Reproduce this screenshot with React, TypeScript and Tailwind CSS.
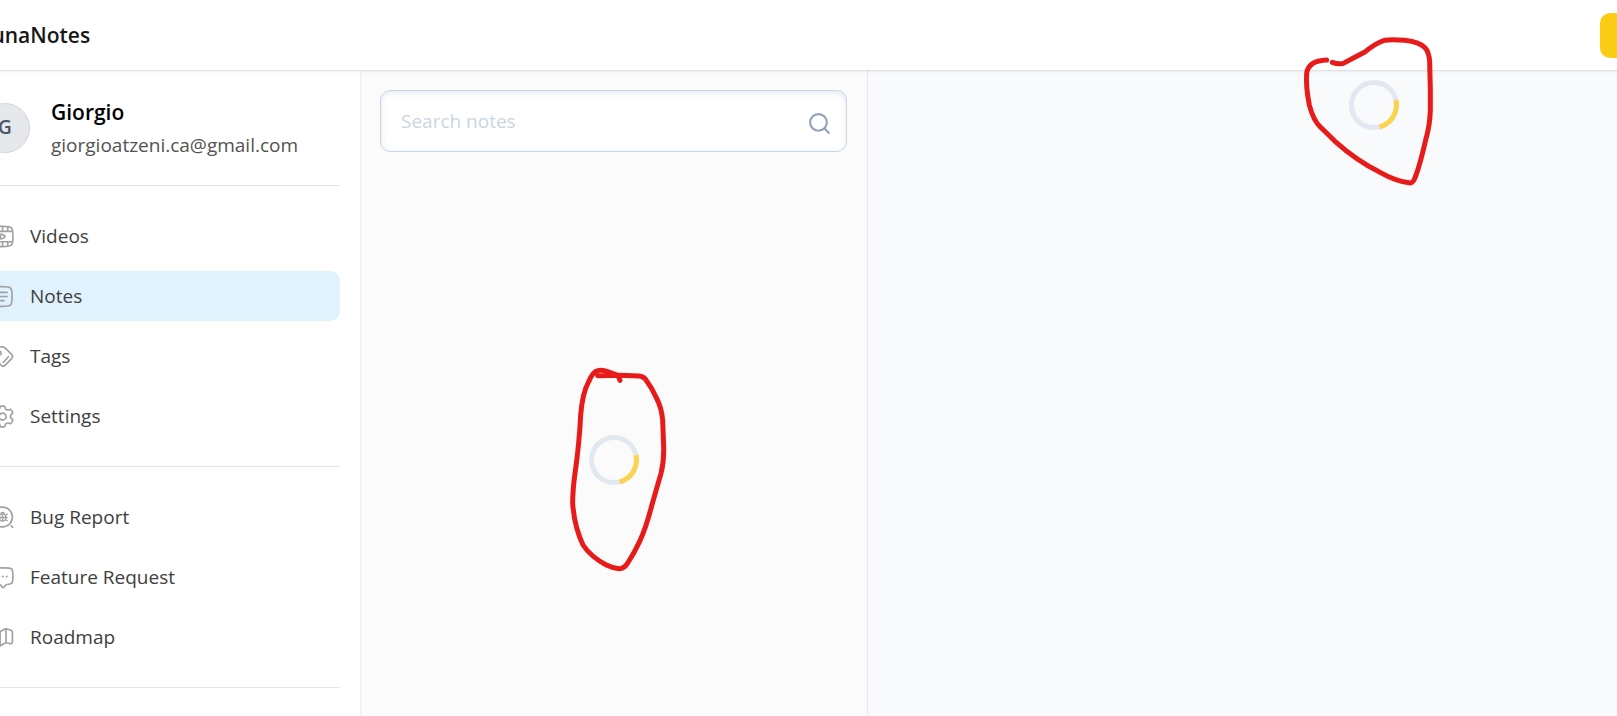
import { ReactNode } from "react";
import { clsx } from "clsx";

interface NavItem {
  label: string;
  icon: ReactNode;
  active?: boolean;
}

const mainItems: NavItem[] = [
  {
    label: "Videos",
    icon: (
      <>
        <path d="M2 12c0-4.6 0-6.8 1.4-8.2C4.9 2.3 7.200 2.300 12 2.300s7.200 0 8.600 1.500C22 5.200 22 7.400 22 12s0 6.800-1.400 8.200c-1.400 1.500-3.800 1.500-8.600 1.500s-7.100 0-8.600-1.500C2 18.800 2 16.600 2 12Z" />
        <path d="M2 7h20M2 17h20M7 2.500V7M12 2.500V7M17 2.500V7M7 17v4.500M12 17v4.500M17 17v4.500" />
        <path d="M14.400 12c0-.6-.6-.9-1.700-1.600-1.100-.6-1.700-1-2.200-.7-.4.300-.4.900-.4 2.300s0 2 .4 2.300c.5.300 1.100-.1 2.200-.7 1.100-.7 1.700-1 1.700-1.600Z" />
      </>
    ),
  },
  {
    label: "Notes",
    active: true,
    icon: (
      <>
        <path d="M3 12c0-4.500 0-6.700 1.300-8.100C5.700 2.500 7.800 2.500 12 2.500s6.400 0 7.800 1.400C21.200 5.300 21.200 7.500 21.200 12s0 6.700-1.400 8.100c-1.400 1.400-3.600 1.400-7.800 1.400s-6.300 0-7.700-1.400C3 18.700 3 16.500 3 12Z" />
        <path d="M8 8h9M8 12h9M8 16h6" />
      </>
    ),
  },
  {
    label: "Tags",
    icon: (
      <>
        <path d="M4.700 13.700c-2.200-2.400-2.200-3.300-1.700-6.500.3-1.800 1.900-3.300 3.700-3.700 1.500-.4 3.200-.7 4.800-.8 1.400-.1 2.100.1 3.200 1.200l6 6c1.400 1.500 1.400 2.600 0 4.100l-6 6.300c-1.500 1.500-2.600 1.500-4.100 0Z" />
        <circle cx="9" cy="8.800" r="1.700" />
        <path d="m18.200 11.800-6 6.400" />
      </>
    ),
  },
  {
    label: "Settings",
    icon: (
      <>
        <path d="M21.300 7.100l-.5-.8c-.4-.7-.6-1-.9-1.100-.3-.1-.6 0-1.300.2l-1.300.3c-.5.1-1 .1-1.400-.2l-.3-.2c-.4-.2-.6-.5-.8-.9l-.3-1c-.2-.7-.3-1-.6-1.200-.3-.2-.6-.2-1.300-.2h-1.100c-.7 0-1 0-1.300.2-.3.200-.4.500-.6 1.200l-.3 1c-.2.400-.4.700-.8.900l-.3.200c-.4.300-.9.300-1.400.2l-1.200-.3c-.7-.2-1.100-.3-1.400-.2-.3.100-.5.400-.9 1.100l-.5.800c-.3.600-.5.900-.5 1.300 0 .3.300.6.700 1.100l1.100 1.100c.3.300.4.900.4 1.400s-.1 1.100-.4 1.400L3 14.500c-.4.500-.7.800-.7 1.100 0 .4.200.7.500 1.300l.5.800c.4.700.6 1 .9 1.100.3.100.7 0 1.400-.2l1.200-.3c.5-.1 1-.1 1.400.2l.3.200c.4.200.6.500.8.900l.3 1c.2.700.3 1 .6 1.200.3.200.6.200 1.300.2h1.100c.7 0 1 0 1.300-.2.3-.2.4-.5.6-1.200l.3-1c.2-.4.4-.7.8-.9l.3-.2c.4-.3.9-.3 1.400-.2l1.300.3c.7.200 1 .3 1.300.2.3-.1.500-.4.900-1.100l.5-.8c.3-.6.5-.9.5-1.300 0-.3-.3-.6-.7-1.100L20 13.400c-.3-.3-.4-.9-.4-1.400s.1-1.100.4-1.400l1.100-1.100c.4-.5.7-.8.7-1.100 0-.4-.2-.7-.5-1.300Z" />
        <circle cx="12.100" cy="12" r="3.300" />
      </>
    ),
  },
];

const supportItems: NavItem[] = [
  {
    label: "Bug Report",
    icon: (
      <>
        <circle cx="12" cy="11.500" r="9.500" />
        <path d="m20 19.500 2.200 2.200" />
        <path
          strokeWidth="1.200"
          d="M9.200 10.500c0-1.200.8-1.900 2.900-1.900s2.900.7 2.900 1.900v2c0 1.800-1 3-2.900 3s-2.900-1.200-2.900-3ZM12.100 9v6.300M7.200 8.400l2 1.500M17 8.400l-2 1.500M7 12h10M7.200 15.300l2-1.300M17 15.300 15 14M10.500 8.500c0-2 3.200-2 3.200 0"
        />
      </>
    ),
  },
  {
    label: "Feature Request",
    icon: (
      <>
        <path d="M8.500 18.700c-2 0-3.800-.1-5-1.300C2.200 16.200 2.200 14.300 2.200 10.700s0-5.500 1.300-6.700c1.200-1.200 3.100-1.200 7-1.200h3.300c3.900 0 5.800 0 7 1.200C22 5.200 22 7.100 22 10.700s0 5.500-1.200 6.700c-1 1-2.300 1.200-4.300 1.300-1 .1-1.500.3-2.100 1.200l-.9 1.200c-.6.900-1.200.9-1.800 0l-.8-1.200c-.6-.9-1.100-1.200-2.400-1.200Z" />
        <path strokeWidth="2" strokeLinecap="round" d="M8.400 11h.01M12.200 11h.01M16 11h.01" />
      </>
    ),
  },
  {
    label: "Roadmap",
    icon: (
      <>
        <path d="M3 8.500c0-1.300.2-1.700 1.300-1.900C6 6.200 8 7.500 9.700 6.500l3.300-2c1.300-.8 2-1 3.400-.7l2.600.7c1.800.5 2.500.8 2.500 2.700v8.600c0 2-.9 2.500-2.700 2l-2-.5c-1.300-.4-2-.2-3.200.5l-3.600 2.200c-1.300.8-2 1-3.500.6l-1.500-.4C3.300 19.700 3 19.300 3 17.500Z" />
        <path d="M9.700 6.500V20M15.400 3.800v13.300" />
      </>
    ),
  },
];

const NavList = ({ items }: { items: NavItem[] }) => (
  <ul className="my-[25px] flex flex-col gap-[10px]">
    {items.map(({ label, icon, active }) => (
      <li key={label}>
        <a
          href="#"
          aria-current={active ? "page" : undefined}
          className={clsx(
            "flex h-[50px] items-center gap-[15px] rounded-[10px] px-[10px] text-[19px] text-neutral-700",
            active && "bg-sky-100",
          )}
        >
          <svg
            viewBox="0 0 24 24"
            fill="none"
            stroke="currentColor"
            strokeWidth="1.6"
            strokeLinejoin="round"
            className="size-[25px] shrink-0 text-neutral-400"
            aria-hidden="true"
          >
            {icon}
          </svg>
          {label}
        </a>
      </li>
    ))}
  </ul>
);

// A loading ring with a hand drawn loop around it
const Spinner = ({ children }: { children: ReactNode }) => (
  <div className="relative size-[50px]" role="status" aria-label="Loading">
    <svg viewBox="0 0 50 50" fill="none" strokeWidth="5" className="size-full">
      <circle cx="25" cy="25" r="22.5" className="stroke-slate-200" />
      <path d="M46.9 20A22.5 22.5 0 0 1 30.600 46.800" className="stroke-[#fcd34d]" />
    </svg>
    {children}
  </div>
);

const App = () => {
  return (
    <div className="overflow-hidden font-['Open_Sans','Noto_Sans',sans-serif]">
      {/* the page is wider than the window and runs out on both sides */}
      <div className="-ml-10 -mr-[263px] flex h-screen flex-col">
        <header className="relative z-10 flex h-[70px] shrink-0 items-center justify-between bg-white px-5 shadow">
          <h1 className="pt-[2px] text-[21px] font-semibold text-neutral-900">LunaNotes</h1>
          <button aria-label="New note" className="h-[45px] w-[260px] rounded-[10px] bg-[#facc15]" />
        </header>

        <div className="flex min-h-0 flex-1">
          <aside className="relative z-[5] w-[400px] shrink-0 bg-white px-5 shadow">
            <div className="flex items-center gap-[21px] py-[25px]">
              <div className="flex size-[50px] shrink-0 items-center justify-center rounded-full border border-gray-300 bg-gray-200 text-[19px] font-semibold text-gray-600">
                G
              </div>
              <div>
                <p className="text-[21px] leading-[35px] font-semibold text-black">Giorgio</p>
                <p className="text-[19px] leading-[30px] text-neutral-600">giorgioatzeni.ca@gmail.com</p>
              </div>
            </div>
            <hr className="border-neutral-200" />
            <NavList items={mainItems} />
            <hr className="border-neutral-200" />
            <NavList items={supportItems} />
            <hr className="border-neutral-200" />
          </aside>

          <section className="flex w-[508px] shrink-0 flex-col border-r border-slate-200 bg-[#fbfbfb]">
            <div className="relative p-5">
              <input
                type="search"
                aria-label="Search notes"
                placeholder="Search notes"
                className="h-[62px] w-full rounded-[10px] border border-slate-300 bg-white pr-[50px] pl-5 text-[19px] inset-shadow-[0_2px_6px] inset-shadow-slate-200 placeholder:text-slate-300"
              />
              <svg
                viewBox="0 0 24 24"
                fill="none"
                stroke="currentColor"
                strokeWidth="2"
                className="absolute top-[41px] right-[35px] size-[25px] text-slate-400"
                aria-hidden="true"
              >
                <circle cx="11" cy="11" r="8" />
                <path d="m16.650 16.650 4.850 4.850" />
              </svg>
            </div>
            <div className="flex flex-1 items-center justify-center pt-8">
              <Spinner>
                <svg
                  viewBox="0 0 360 660"
                  fill="none"
                  strokeWidth="15"
                  strokeLinecap="round"
                  strokeLinejoin="round"
                  className="absolute top-[-75px] left-[-29px] z-20 h-[220px] w-[120px] max-w-none stroke-[#e81b1b]"
                >
                  <path d="M113 47L180 46L238 48Q249 49 256 57Q276 84 288 111Q305 143 308 180L311 262Q312 305 303 340L276 434Q258 504 239 544Q222 580 205 606Q194 626 178 626Q159 625 139 615Q92 590 69 555Q43 500 38 430Q38 390 45 340Q58 250 62 165Q67 100 86 65Q99 34 113 32Q128 29 143 35Q163 42 175 48L180 61" />
                </svg>
              </Spinner>
            </div>
          </section>

          <main className="flex flex-1 items-start justify-center bg-slate-50 pt-[10px]">
            <Spinner>
              <svg
                viewBox="0 0 480 495"
                fill="none"
                strokeWidth="15"
                strokeLinecap="round"
                strokeLinejoin="round"
                className="absolute top-[-50px] left-[-59px] z-20 h-[165px] w-[160px] max-w-none stroke-[#e81b1b]"
              >
                <path d="M127 97Q145 104 160 100L190 84L226 65Q259 38 283 31Q305 27 345 31Q389 37 405 53Q417 66 419 95L421 180V240Q420 285 407 330Q390 405 376 441Q370 458 361 459Q320 455 270 427Q200 392 135 334L92 292Q70 272 58 225Q47 170 50 130Q55 92 110 90" />
              </svg>
            </Spinner>
          </main>
        </div>
      </div>
    </div>
  );
};

export default App;
